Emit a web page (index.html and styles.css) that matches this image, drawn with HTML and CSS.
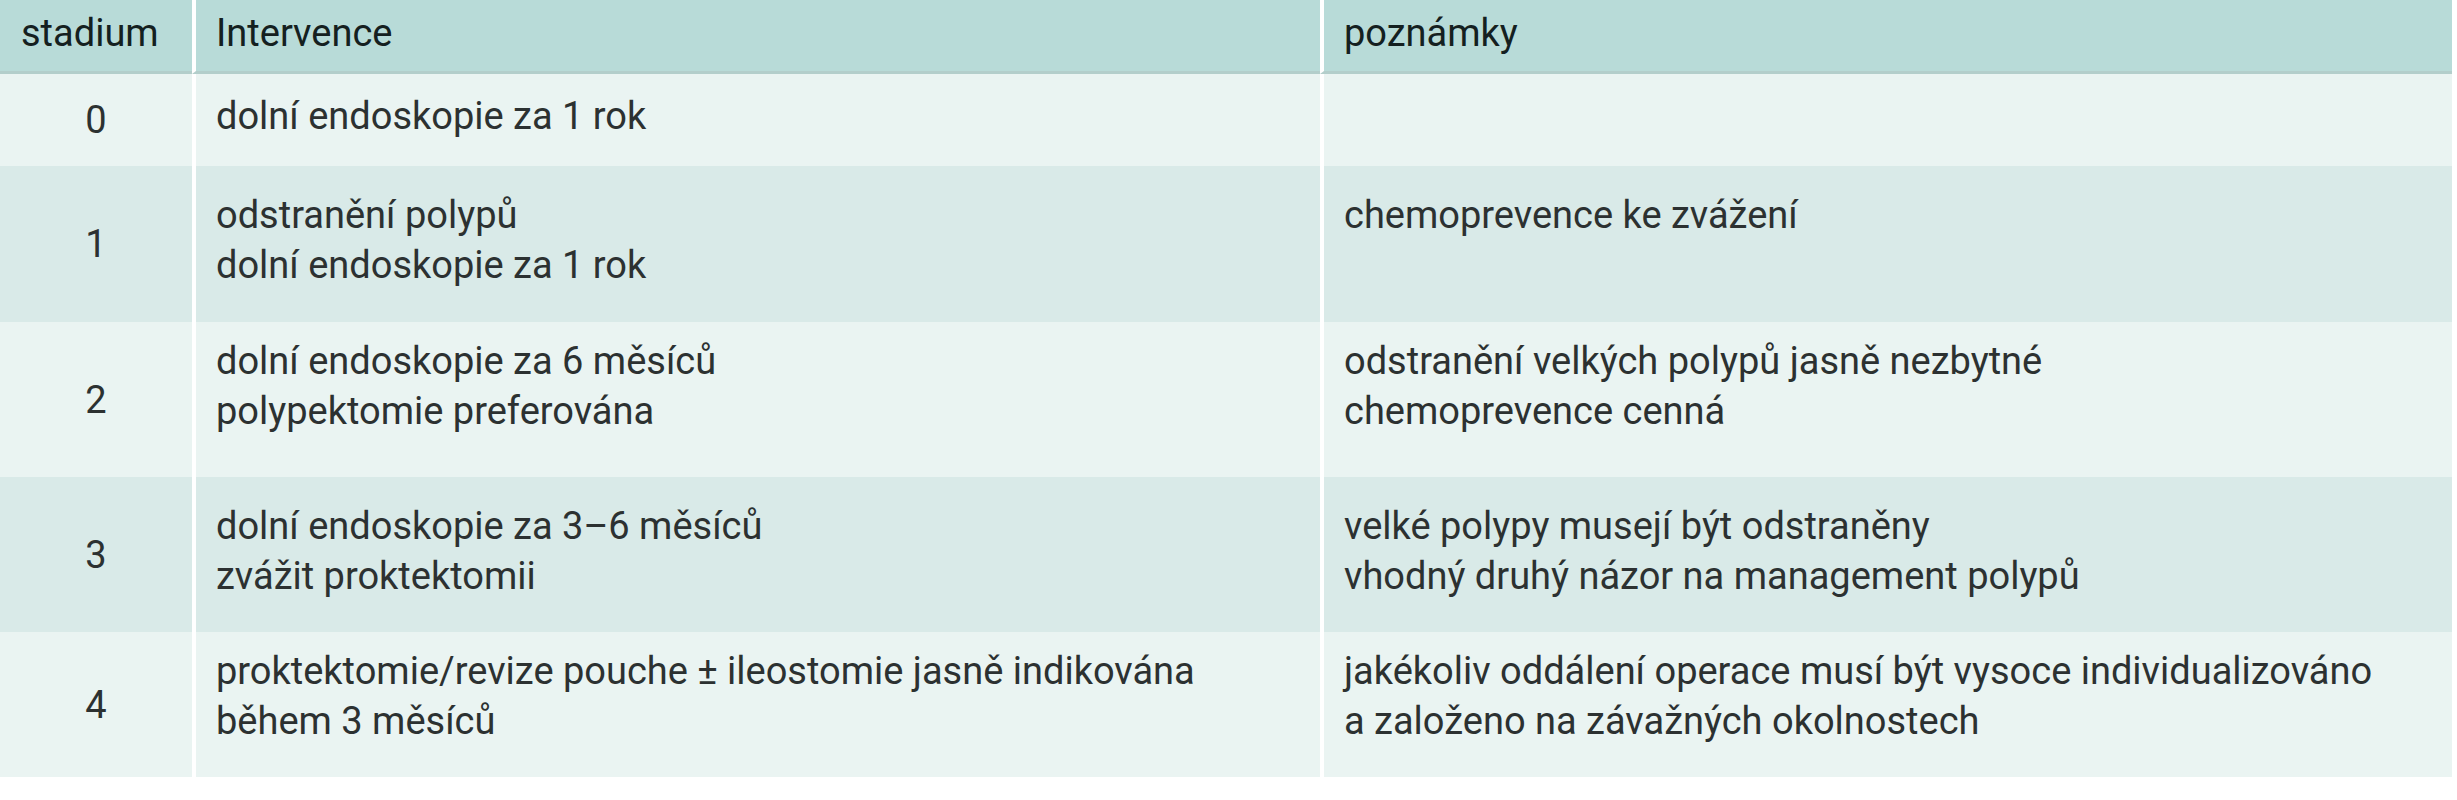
FILE: index.html
```html
<!DOCTYPE html>
<html lang="cs">
<head>
<meta charset="utf-8">
<title>Stadium</title>
<link rel="stylesheet" href="styles.css">
</head>
<body>
<table class="grid">
  <colgroup>
    <col class="c-stage">
    <col class="c-int">
    <col class="c-note">
  </colgroup>
  <thead>
    <tr class="head">
      <th class="stage-h">stadium</th>
      <th>Intervence</th>
      <th>poznámky</th>
    </tr>
  </thead>
  <tbody>
    <tr class="light r0">
      <td class="stage">0</td>
      <td>dolní endoskopie za 1 rok</td>
      <td></td>
    </tr>
    <tr class="dark r1">
      <td class="stage">1</td>
      <td>odstranění polypů<br>dolní endoskopie za 1 rok</td>
      <td>chemoprevence ke zvážení</td>
    </tr>
    <tr class="light r2">
      <td class="stage">2</td>
      <td>dolní endoskopie za 6 měsíců<br>polypektomie preferována</td>
      <td>odstranění velkých polypů jasně nezbytné<br>chemoprevence cenná</td>
    </tr>
    <tr class="dark r3">
      <td class="stage">3</td>
      <td>dolní endoskopie za 3–6 měsíců<br>zvážit proktektomii</td>
      <td>velké polypy musejí být odstraněny<br>vhodný druhý názor na management polypů</td>
    </tr>
    <tr class="light r4">
      <td class="stage">4</td>
      <td>proktektomie/revize pouche ± ileostomie jasně indikována<br>během 3 měsíců</td>
      <td>jakékoliv oddálení operace musí být vysoce individualizováno<br>a založeno na závažných okolnostech</td>
    </tr>
  </tbody>
</table>
</body>
</html>
```

FILE: styles.css
```css
html, body {
  margin: 0;
  padding: 0;
  background: #ffffff;
}

.grid {
  border-collapse: separate;
  border-spacing: 0;
  table-layout: fixed;
  width: 2452px;
  font-family: Roboto, "Liberation Sans", sans-serif;
  font-size: 38px;
  line-height: 50px;
  color: #2c3131;
}

.c-stage { width: 192px; }
.c-int { width: 1128px; }
.c-note { width: 1132px; }

.grid th,
.grid td {
  padding: 0 10px 0 20px;
  text-align: left;
  vertical-align: top;
  box-sizing: border-box;
}

.grid th + th,
.grid td + td {
  border-left: 4px solid #ffffff;
}

.head th {
  height: 74px;
  background: #b8dbd8;
  border-bottom: 3px solid #b3cecb;
  font-weight: 400;
  color: #142020;
  vertical-align: middle;
  padding-bottom: 6px;
}

.head .stage-h {
  padding-left: 21px;
  padding-right: 0;
}

.grid td.stage {
  text-align: center;
  vertical-align: middle;
  padding: 0;
}

.light td { background: #eaf4f2; }
.dark td { background: #d9eae8; }

.r0 { height: 92px; }
.r1 { height: 156px; }
.r2 { height: 155px; }
.r3 { height: 155px; }
.r4 { height: 145px; }

.r0 td { padding-top: 17px; }
.r1 td { padding-top: 24px; }
.r2 td { padding-top: 14px; }
.r3 td { padding-top: 24px; }
.r4 td { padding-top: 14px; }
```
